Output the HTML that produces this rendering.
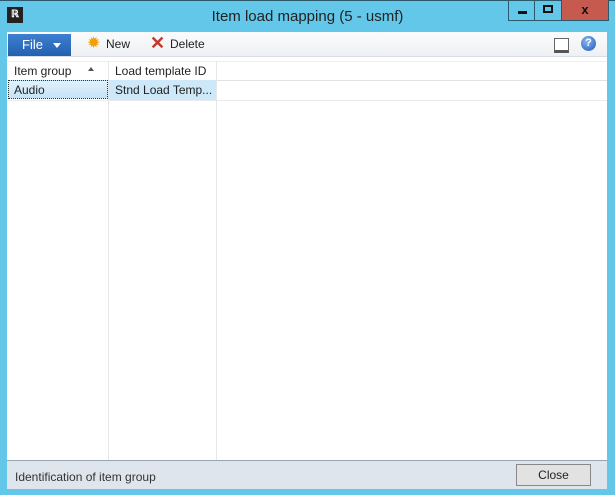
<!DOCTYPE html><html><head><style>
body{margin:0;width:615px;height:495px;background:#62c7e9;font-family:"Liberation Sans",sans-serif;font-size:12px;position:relative;overflow:hidden}
.a{position:absolute}
</style></head><body>
<div class="a" style="left:0;top:0;width:615px;height:1px;background:#2a5a6a"></div>
<div class="a" style="left:7px;top:7px;width:16px;height:16px;background:#222;color:#fff;font-size:10px;font-weight:bold;line-height:16px;text-align:center">ℝ</div>
<div class="a" style="left:0;top:8px;width:615px;text-align:center;font-size:15px;color:#222">Item load mapping (5 - usmf)</div>
<div class="a" style="left:508px;top:0;width:27px;height:21px;border:1px solid #2a5a6a;border-top:0;box-sizing:border-box"><div class="a" style="left:9px;top:11px;width:9px;height:3px;background:#111"></div></div>
<div class="a" style="left:535px;top:0;width:27px;height:21px;border:1px solid #2a5a6a;border-top:0;border-left:0;box-sizing:border-box"><div class="a" style="left:8px;top:5px;width:6px;height:4px;border:2px solid #111"></div></div>
<div class="a" style="left:562px;top:0;width:47px;height:21px;background:#c75a4e;border:1px solid #2a5a6a;border-top:0;border-left:0;box-sizing:border-box;text-align:center;font-weight:bold;font-size:13px;line-height:19px;color:#111">x</div>
<div class="a" style="left:7px;top:32px;width:600px;height:456px;background:#fff"></div>
<div class="a" style="left:7px;top:32px;width:600px;height:24px;background:linear-gradient(#fafbfc,#eef1f4);border-bottom:1px solid #d8dde3"></div>
<div class="a" style="left:8px;top:34px;width:63px;height:22px;background:linear-gradient(#3d7fd0,#2560b0);color:#fff;font-size:13px;line-height:22px"><span style="margin-left:14px">File</span><span class="a" style="left:45px;top:9px;border:4px solid transparent;border-top:5px solid #fff"></span></div>
<div class="a" style="left:87px;top:36px;color:#f5a000;font-size:16px;line-height:16px">✹</div>
<div class="a" style="left:106px;top:37px;color:#222">New</div>
<div class="a" style="left:150px;top:33px;color:#c0392b;font-size:18px;font-weight:bold">✕</div>
<div class="a" style="left:170px;top:37px;color:#222">Delete</div>
<div class="a" style="left:554px;top:38px;width:13px;height:11px;border:1px solid #666;border-bottom:3px solid #555;background:#fff"></div>
<div class="a" style="left:581px;top:36px;width:15px;height:15px;border-radius:50%;background:radial-gradient(circle at 40% 35%,#8bb8f0,#1c56b8);color:#fff;font-weight:bold;font-size:11px;line-height:15px;text-align:center">?</div>
<div class="a" style="left:8px;top:61px;width:599px;height:18px;border-bottom:1px solid #e0e3e6;border-top:1px solid #eee"></div>
<div class="a" style="left:108px;top:61px;width:1px;height:399px;background:#e3e6ea"></div>
<div class="a" style="left:216px;top:61px;width:1px;height:399px;background:#e3e6ea"></div>
<div class="a" style="left:14px;top:64px;color:#222">Item group</div>
<div class="a" style="left:88px;top:67px;border:3px solid transparent;border-bottom:4px solid #555;border-top:0"></div>
<div class="a" style="left:115px;top:64px;color:#222">Load template ID</div>
<div class="a" style="left:8px;top:80px;width:100px;height:19px;background:linear-gradient(#e2f1fb,#c5e3f6);border:1px dotted #333;box-sizing:border-box"></div>
<div class="a" style="left:109px;top:80px;width:107px;height:20px;background:#cde8f8"></div>
<div class="a" style="left:14px;top:83px;color:#222">Audio</div>
<div class="a" style="left:115px;top:83px;color:#222">Stnd Load Temp...</div>
<div class="a" style="left:8px;top:100px;width:599px;height:1px;background:#e8eaec"></div>
<div class="a" style="left:7px;top:460px;width:600px;height:28px;background:#dfe5ec;border-top:1px solid #9aa4ae"></div>
<div class="a" style="left:15px;top:470px;color:#333">Identification of item group</div>
<div class="a" style="left:516px;top:464px;width:75px;height:22px;border:1px solid #888;background:#e2e2e2;box-sizing:border-box;text-align:center;line-height:20px;color:#222">Close</div>
</body></html>
